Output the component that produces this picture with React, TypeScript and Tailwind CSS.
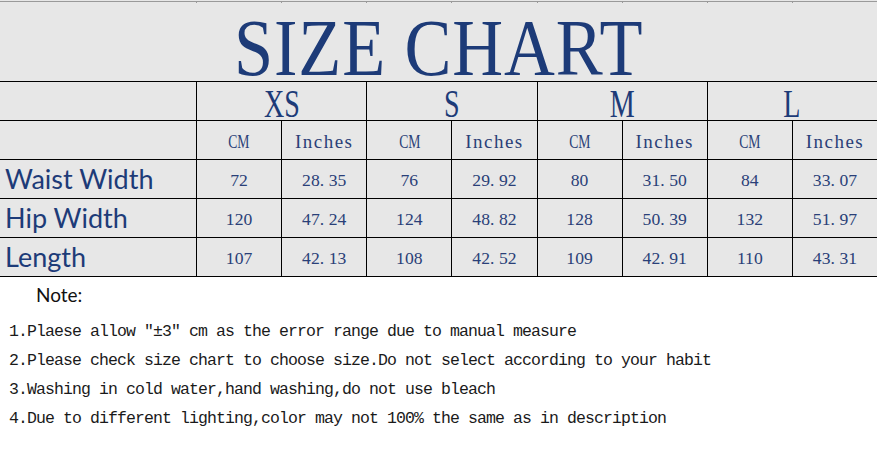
import React from 'react';

const sizes = ['XS', 'S', 'M', 'L'];

const rows = [
  { label: 'Waist Width', values: ['72', '28.35', '76', '29.92', '80', '31.50', '84', '33.07'] },
  { label: 'Hip Width', values: ['120', '47.24', '124', '48.82', '128', '50.39', '132', '51.97'] },
  { label: 'Length', values: ['107', '42.13', '108', '42.52', '109', '42.91', '110', '43.31'] },
];

const notes = [
  '1.Plaese allow ″±3″ cm as the error range due to manual measure',
  '2.Please check size chart to choose size.Do not select according to your habit',
  '3.Washing in cold water,hand washing,do not use bleach',
  '4.Due to different lighting,color may not 100% the same as in description',
];

const serif = "font-['Liberation_Serif',serif]";
const mono = "font-['Liberation_Mono',monospace]";

// numbers are set like the original's half-width font: the dot keeps a full digit cell
const Num: React.FC<{ value: string }> = ({ value }) => {
  const [whole, frac] = value.split('.');
  return (
    <span className="whitespace-nowrap">
      {whole}
      {frac !== undefined && (
        <>
          <span className="inline-block w-[9px]">.</span>
          {frac}
        </>
      )}
    </span>
  );
};

const App: React.FC = () => {
  return (
    <div className="w-[877px] h-[467px] bg-white overflow-hidden">
      {/* chart block */}
      <div className="bg-[#e7e7e7]">
        {/* faint grid lines along the top edge */}
        <div className="pt-[1px]">
          <div className="grid grid-cols-[196px_repeat(8,minmax(0,1fr))] h-[2px] border-t border-[#9a9a9a]">
            <div />
            {Array.from({ length: 8 }).map((_, i) => (
              <div key={i} className="border-l border-[#9a9a9a]" />
            ))}
          </div>
        </div>

        <div className="h-[79px] border-b border-black flex items-end justify-center">
          <h1 className={`${serif} text-[80px] leading-[66px] text-[#1d3b78] scale-x-[0.88] tracking-[1px]`}>
            SIZE CHART
          </h1>
        </div>

        <div className="grid grid-cols-[196px_repeat(8,minmax(0,1fr))]">
          <div className="h-[39px] border-b border-black" />
          {sizes.map((s) => (
            <div key={s} className="col-span-2 h-[39px] border-b border-l border-black flex items-end justify-center">
              <span className={`${serif} text-[39px] leading-[32px] text-[#1d3b78] scale-x-[0.72]`}>{s}</span>
            </div>
          ))}

          <div className="h-[39px] border-b border-black" />
          {sizes.map((s) => (
            <React.Fragment key={s}>
              <div className={`h-[39px] border-b border-l border-black flex items-center justify-center pt-[4px] ${serif} text-[19px] text-[#2a3f78]`}>
                <span className="scale-x-[0.72]">CM</span>
              </div>
              <div className={`h-[39px] border-b border-l border-black flex items-center justify-center pt-[4px] ${serif} text-[19px] tracking-[1.5px] text-[#2a3f78]`}>
                Inches
              </div>
            </React.Fragment>
          ))}

          {rows.map((r) => (
            <React.Fragment key={r.label}>
              <div className="h-[39px] border-b border-black flex items-center pl-[5px] font-['Lato',sans-serif] text-[27px] text-[#1d3b78]">
                {r.label}
              </div>
              {r.values.map((v, i) => (
                <div
                  key={i}
                  className={`h-[39px] border-b border-l border-black flex items-center justify-center pt-[2px] ${serif} text-[17.6px] text-[#2a3f78]`}
                >
                  <Num value={v} />
                </div>
              ))}
            </React.Fragment>
          ))}
        </div>
      </div>

      {/* notes */}
      <div className="pt-[4px]">
        <p className="pl-[36px] font-['Lato',sans-serif] text-[19px] text-[#111]">Note:</p>
        <ul className={`mt-[7px] pl-[9px] ${mono} text-[16.5px] tracking-[-0.9px] text-[#1a1a1a] flex flex-col`}>
          {notes.map((n) => (
            <li key={n} className="h-[29px] leading-[29px] whitespace-pre">
              {n}
            </li>
          ))}
        </ul>
      </div>
    </div>
  );
};

export default App;
